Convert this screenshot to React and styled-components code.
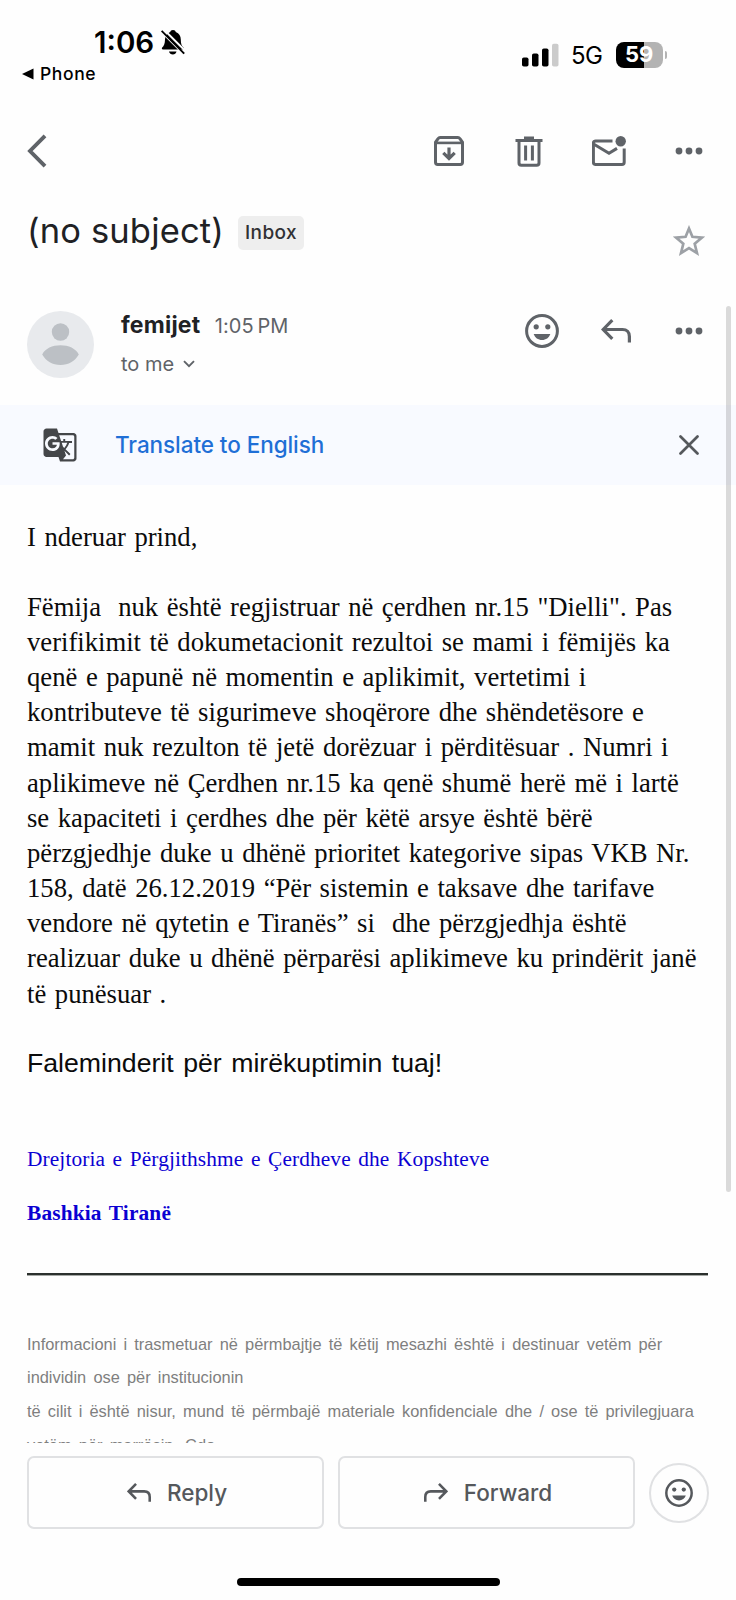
import styled, { createGlobalStyle, css } from 'styled-components';
import { MdGTranslate } from 'react-icons/md';

const GlobalStyle = createGlobalStyle`
	* {
		box-sizing: border-box;
	}

	body {
		margin: 0;
		background: #fefefe;
		font-family: Inter, Roboto, sans-serif;
	}

	p, h1, hr {
		margin: 0;
	}

	button {
		background: none;
		border: 0;
		color: inherit;
		display: block;
		font: inherit;
		padding: 0;
	}

	svg {
		display: block;
	}
`;

const messageLines = [
	'I nderuar prind,',
	'',
	'Fëmija  nuk është regjistruar në çerdhen nr.15 "Dielli". Pas',
	'verifikimit të dokumetacionit rezultoi se mami i fëmijës ka',
	'qenë e papunë në momentin e aplikimit, vertetimi i',
	'kontributeve të sigurimeve shoqërore dhe shëndetësore e',
	'mamit nuk rezulton të jetë dorëzuar i përditësuar . Numri i',
	'aplikimeve në Çerdhen nr.15 ka qenë shumë herë më i lartë',
	'se kapaciteti i çerdhes dhe për këtë arsye është bërë',
	'përzgjedhje duke u dhënë prioritet kategorive sipas VKB Nr.',
	'158, datë 26.12.2019 “Për sistemin e taksave dhe tarifave',
	'vendore në qytetin e Tiranës” si  dhe përzgjedhja është',
	'realizuar duke u dhënë përparësi aplikimeve ku prindërit janë',
	'të punësuar .',
];

const disclaimerLines = [
	'Informacioni i trasmetuar në përmbajtje të këtij mesazhi është i destinuar vetëm për',
	'individin ose për institucionin',
	'të cilit i është nisur, mund të përmbajë materiale konfidenciale dhe / ose të privilegjuara',
	'vetëm për marrësin. Çdo',
];

const BellOffIcon = () => (
	<svg width='24' height='25' viewBox='0 0 24 25'>
		<path
			d='M12 0c1.6 0 2.5.9 2.8 2 3.4 1.2 5 4 5 7.5 0 4.5 1 6.5 2.6 8 .6.6.5 2-.8 2H2c-1.3 0-1.4-1.3-.8-2 1.700-1.600 2.700-3.600 2.800-8C4.100 6 6 3.200 9.200 2 9.500.9 10.400 0 12 0z'
			fill='#000'
		/>
		<path d='M8 21.5h7.5c-.4 2-1.9 3-3.7 3s-3.4-1-3.800-3z' fill='#000' />
		<path d='M2-1.3L25 21.7' stroke='#fefefe' strokeWidth='2' />
		<path d='M-1 .6L22 23.6' stroke='#fefefe' strokeWidth='1.5' />
		<path d='M.6.8L23.2 23.6' stroke='#000' strokeWidth='1.9' />
	</svg>
);

const SignalIcon = () => (
	<svg width='37' height='24' viewBox='0 0 37 24'>
		<rect x='0' y='14.5' width='6.5' height='9' rx='1.8' />
		<rect x='10' y='10.5' width='6.5' height='13' rx='1.8' />
		<rect x='20' y='5.5' width='6.5' height='18' rx='1.8' />
		<rect x='30' y='.7' width='6.5' height='22.8' rx='1.8' fill='#cbcbcb' />
	</svg>
);

const BackIcon = () => (
	<svg width='20' height='34' viewBox='0 0 20 34' fill='none' stroke='currentColor' strokeWidth='3.9'>
		<path d='M18 1.800L3 17l15 15.200' />
	</svg>
);

const ArchiveIcon = () => (
	<svg width='30' height='30' viewBox='0 0 30 30' fill='none' stroke='currentColor' strokeWidth='3'>
		<path d='M1.500 6.300v20c0 1.300.9 2.200 2.200 2.200h22.600c1.300 0 2.200-.9 2.200-2.200v-20l-2.400-3.500c-.6-.8-1.200-1.300-2.200-1.300H6.100c-1 0-1.600.5-2.200 1.300z' />
		<path d='M1.4 6.9h27.2' strokeWidth='2.6' />
		<path d='M15 11.5V22M9.300 16.800l5.700 5.700 5.700-5.700' strokeWidth='3.2' />
	</svg>
);

const TrashIcon = () => (
	<svg width='28' height='31' viewBox='0 0 28 31' fill='none' stroke='currentColor' strokeWidth='3'>
		<path d='M.5 4.400h27M9 2.100h10M4 5v22c0 1.300.9 2.300 2.300 2.300h15.400c1.400 0 2.300-1 2.300-2.300V5' />
		<path d='M10.6 9.500v15M17.400 9.500v15' />
	</svg>
);

const UnreadIcon = () => (
	<svg width='34' height='31' viewBox='0 0 34 31' fill='none' stroke='currentColor' strokeWidth='3'>
		<path d='M20.500 4.900H3.700c-1.300 0-2.300 1-2.300 2.300v19c0 1.300 1 2.300 2.300 2.300h26.200c1.300 0 2.300-1 2.300-2.300V12.500' />
		<path d='M2 8.300l15 9 8-4.900' />
		<circle cx='28.7' cy='5.2' r='5.2' fill='currentColor' stroke='none' />
	</svg>
);

const DotsIcon = () => (
	<svg width='28' height='8' viewBox='0 0 28 8' fill='currentColor'>
		<circle cx='4' cy='4' r='3.4' />
		<circle cx='14' cy='4' r='3.4' />
		<circle cx='24' cy='4' r='3.4' />
	</svg>
);

const StarIcon = () => (
	<svg width='32' height='31' viewBox='0 0 32 31' fill='none' stroke='#9da1a6' strokeWidth='2.7'>
		<path d='M16 3.500l3.400 8.300 9.600.8-7.300 6.200 2.300 9.300L16 23.200l-8 4.900 2.300-9.300L3 12.600l9.600-.8z' />
	</svg>
);

const SmileIcon = ({ size }) => (
	<svg width={size} height={size} viewBox='0 0 34 34' fill='currentColor'>
		<circle cx='17' cy='17' r='15.4' fill='none' stroke='currentColor' strokeWidth='3' />
		<circle cx='11.2' cy='12.8' r='2.6' />
		<circle cx='22.8' cy='12.8' r='2.6' />
		<path d='M8.700 20h16.600c-1.200 3.700-4.400 6-8.300 6s-7.100-2.300-8.300-6z' />
	</svg>
);

const ReplyIcon = ({ size = 30, flip = false }) => (
	<svg
		width={size}
		height={size * 0.8}
		viewBox='0 0 30 24'
		fill='none'
		stroke='currentColor'
		strokeWidth='3.2'
		transform={flip ? 'scale(-1 1)' : undefined}
	>
		<path d='M11.300 1.200L2.200 10.500l9.100 9.300M2 10.500h19.500c4.300 0 6.900 2.700 6.900 7v6' />
	</svg>
);

const ChevronIcon = () => (
	<svg width='12' height='8' viewBox='0 0 12 8' fill='none' stroke='#5f6368' strokeWidth='1.9'>
		<path d='M1 1.200l5 5 5-5' />
	</svg>
);

const CloseIcon = () => (
	<svg width='20' height='20' viewBox='0 0 20 20' stroke='#55585c' strokeWidth='2.7' strokeLinecap='round'>
		<path d='M1.500 1.500l17 17M18.500 1.500l-17 17' />
	</svg>
);

const Avatar = () => (
	<svg width='67' height='67' viewBox='0 0 67 67'>
		<circle cx='33.5' cy='33.5' r='33.5' fill='#e8eaed' />
		<circle cx='33.5' cy='21' r='8.7' fill='#bcc0c5' />
		<path d='M15.200 43.500c3-6 10.200-9.200 18.300-9.200s15.300 3.200 18.300 9.200C48 50 41.500 54 33.500 54s-14.500-4-18.300-10.500z' fill='#bcc0c5' />
	</svg>
);

const App = () => (
	<>
		<GlobalStyle />
		<Screen>
			<StatusBar>
				<StatusLeft>
					<Clock>
						1:06
						<BellOffIcon />
					</Clock>
					<BackToApp>
						<svg width='12' height='12' viewBox='0 0 12 12'>
							<path d='M0 6L11.500.5v11z' />
						</svg>
						Phone
					</BackToApp>
				</StatusLeft>
				<StatusRight>
					<SignalIcon />
					<Network>5G</Network>
					<Battery>59</Battery>
					<BatteryTip />
				</StatusRight>
			</StatusBar>

			<Toolbar>
				<button aria-label='Back'>
					<BackIcon />
				</button>
				<ToolbarActions>
					<IconButton aria-label='Archive'>
						<ArchiveIcon />
					</IconButton>
					<IconButton aria-label='Delete'>
						<TrashIcon />
					</IconButton>
					<IconButton aria-label='Mark as unread'>
						<UnreadIcon />
					</IconButton>
					<IconButton aria-label='More'>
						<DotsIcon />
					</IconButton>
				</ToolbarActions>
			</Toolbar>

			<SubjectRow>
				<Subject>(no subject)</Subject>
				<Label>Inbox</Label>
				<StarButton aria-label='Star'>
					<StarIcon />
				</StarButton>
			</SubjectRow>

			<SenderRow>
				<Avatar />
				<SenderInfo>
					<SenderLine>
						<SenderName>femijet</SenderName>
						<SentTime>{'1:05\u2009PM'}</SentTime>
					</SenderLine>
					<Recipient>
						to me
						<ChevronIcon />
					</Recipient>
				</SenderInfo>
				<SenderActions>
					<IconButton aria-label='React'>
						<SmileIcon size={34} />
					</IconButton>
					<IconButton aria-label='Reply'>
						<ReplyIcon />
					</IconButton>
					<IconButton aria-label='More'>
						<DotsIcon />
					</IconButton>
				</SenderActions>
			</SenderRow>

			<TranslateBar>
				<MdGTranslate size={36} color='#444649' />
				<TranslateLink>Translate to English</TranslateLink>
				<button aria-label='Close'>
					<CloseIcon />
				</button>
			</TranslateBar>

			<MessageBody>
				{messageLines.map((line, i) => (
					<MessageLine key={i}>{line}</MessageLine>
				))}
				<Thanks>Faleminderit për mirëkuptimin tuaj!</Thanks>
				<Department>Drejtoria e Përgjithshme e Çerdheve dhe Kopshteve</Department>
				<Municipality>Bashkia Tiranë</Municipality>
				<Divider />
				{disclaimerLines.map((line) => (
					<DisclaimerLine key={line}>{line}</DisclaimerLine>
				))}
			</MessageBody>

			<ReplyBar>
				<ReplyButton>
					<ReplyIcon size={24} />
					<ReplyText>Reply</ReplyText>
				</ReplyButton>
				<ReplyButton>
					<ReplyIcon size={24} flip />
					<ReplyText>Forward</ReplyText>
				</ReplyButton>
				<ReactButton aria-label='React'>
					<SmileIcon size={28} />
				</ReactButton>
			</ReplyBar>

			<HomeIndicator />
			<ScrollThumb />
		</Screen>
	</>
);

export default App;

const Screen = styled.main`
	background: #fefefe;
	color: #5f6368;
	display: flex;
	flex-direction: column;
	height: 1600px;
	overflow: hidden;
	position: relative;
	width: 736px;
`;

const StatusBar = styled.header`
	color: #000;
	display: flex;
	height: 112px;
	justify-content: space-between;
	padding: 24px 69px 0 21.5px;
`;

const StatusLeft = styled.div`
	display: flex;
	flex-direction: column;
`;

const Clock = styled.div`
	align-items: center;
	display: flex;
	font-size: 29.5px;
	font-weight: 600;
	gap: 7px;
	height: 36px;
	padding-left: 72.5px;
`;

const BackToApp = styled.div`
	align-items: center;
	display: flex;
	font-size: 17.5px;
	font-weight: 500;
	gap: 6.5px;
	height: 27px;
	letter-spacing: 0.6px;
`;

const StatusRight = styled.div`
	align-items: center;
	display: flex;
	height: 61px;
`;

const Network = styled.span`
	font-size: 24px;
	letter-spacing: -0.5px;
	margin: 2px 13px 0 12px;
`;

const Battery = styled.span`
	background: linear-gradient(to right, #000 59%, #b3b3b3 59%);
	border-radius: 8px;
	color: #fff;
	font-size: 22px;
	font-weight: 700;
	height: 26px;
	line-height: 25px;
	text-align: center;
	width: 47.5px;
`;

const BatteryTip = styled.span`
	background: #b3b3b3;
	border-radius: 0 4px 4px 0;
	height: 8px;
	margin-left: 1.5px;
	width: 2.5px;
`;

const Toolbar = styled.nav`
	align-items: center;
	display: flex;
	height: 78px;
	justify-content: space-between;
	padding: 0 27px;
`;

const ToolbarActions = styled.div`
	align-items: center;
	display: flex;
	gap: 40px;
	margin-right: 0.5px;
`;

const IconButton = styled.button`
	align-items: center;
	display: flex;
	height: 40px;
	justify-content: center;
	width: 40px;
`;

const SubjectRow = styled.section`
	display: flex;
	height: 115px;
	padding: 0 31px 0 27px;
`;

const Subject = styled.h1`
	color: #202124;
	font-size: 34.5px;
	font-weight: 400;
	height: 84px;
	letter-spacing: 0.15px;
	line-height: 82px;
	white-space: nowrap;
	width: 211px;
`;

const Label = styled.span`
	background: #eeeeee;
	border-radius: 5px;
	color: #303134;
	font-size: 19px;
	font-weight: 500;
	height: 34px;
	letter-spacing: 0.4px;
	line-height: 34px;
	margin-top: 25.5px;
	text-align: center;
	width: 66px;
`;

const StarButton = styled.button`
	align-self: flex-start;
	margin: 35px 0 0 auto;
`;

const SenderRow = styled.section`
	display: flex;
	height: 99.5px;
	padding: 6px 27px 0;
`;

const SenderInfo = styled.div`
	margin-left: 27px;
`;

const SenderLine = styled.div`
	align-items: baseline;
	display: flex;
	gap: 14.5px;
	line-height: 28px;
`;

const SenderName = styled.span`
	color: #202124;
	font-size: 23px;
	font-weight: 700;
	letter-spacing: 0.2px;
`;

const SentTime = styled.span`
	font-size: 20px;
	letter-spacing: 0.05px;
`;

const Recipient = styled.div`
	align-items: center;
	display: flex;
	font-size: 20px;
	gap: 9px;
	height: 28px;
	line-height: 28px;
	margin-top: 9.5px;
`;

const SenderActions = styled.div`
	display: flex;
	gap: 33.5px;
	margin-left: auto;
`;

const TranslateBar = styled.section`
	align-items: center;
	background: #f8faff;
	display: flex;
	height: 80px;
	padding: 0 37px 0 42px;
`;

const TranslateLink = styled.a`
	color: #1f6fd6;
	flex: 1;
	font-size: 22.5px;
	font-weight: 500;
	letter-spacing: -0.07px;
	margin-left: 37px;
	padding-bottom: 0.5px;
`;

const MessageBody = styled.article`
	color: #0b0b0b;
	height: 958.5px;
	overflow: hidden;
	padding: 35px 27px 0;
`;

const serif = css`
	font-family: 'Liberation Serif', 'Times New Roman', serif;
`;

const sans = css`
	font-family: 'Liberation Sans', Arial, sans-serif;
`;

const MessageLine = styled.p`
	${serif}

	font-size: 26.67px;
	height: 35.17px;
	line-height: 35.17px;
	white-space: pre;
	word-spacing: 1.9px;
`;

const Thanks = styled.p`
	${sans}

	font-size: 26.67px;
	line-height: 36px;
	margin-top: 33.5px;
	white-space: pre;
	word-spacing: 2.1px;
`;

const Department = styled.p`
	${serif}

	color: #0b00d2;
	font-size: 21.33px;
	letter-spacing: 0.12px;
	line-height: 28px;
	margin-top: 64px;
	white-space: pre;
	word-spacing: 2.1px;
`;

const Municipality = styled.p`
	${serif}

	color: #0b00d2;
	font-size: 21.33px;
	font-weight: 700;
	letter-spacing: 0.16px;
	line-height: 28px;
	margin-top: 25.5px;
	white-space: pre;
	word-spacing: 2.1px;
`;

const Divider = styled.hr`
	border: 0;
	border-bottom: 1px solid #a5a8a5;
	border-top: 2px solid #2b302d;
	margin: 46px 1px 52px 0;
`;

const DisclaimerLine = styled.p`
	${sans}

	color: #7f7f7f;
	font-size: 16.4px;
	line-height: 33.67px;
	white-space: pre;
	word-spacing: 2.6px;
`;

const ReplyBar = styled.footer`
	align-items: center;
	display: flex;
	gap: 14px;
	margin-top: 13px;
	padding: 0 27px;
`;

const ReplyButton = styled.button`
	align-items: center;
	border: 2px solid #e0e1e3;
	border-radius: 7px;
	color: #55585c;
	display: flex;
	flex: 1;
	gap: 16px;
	height: 73px;
	justify-content: center;
	padding-left: 3px;
`;

const ReplyText = styled.span`
	font-size: 22.5px;
	font-weight: 500;
`;

const ReactButton = styled.button`
	align-items: center;
	border: 2px solid #e0e1e3;
	border-radius: 50%;
	color: #55585c;
	display: flex;
	height: 60px;
	justify-content: center;
	width: 60px;
`;

const HomeIndicator = styled.div`
	background: #000;
	border-radius: 4px;
	height: 8px;
	margin: 49px auto 0;
	width: 263px;
`;

const ScrollThumb = styled.div`
	background: rgba(0, 0, 0, 0.14);
	border-radius: 3px;
	height: 886px;
	position: absolute;
	right: 5px;
	top: 306px;
	width: 5px;
`;
